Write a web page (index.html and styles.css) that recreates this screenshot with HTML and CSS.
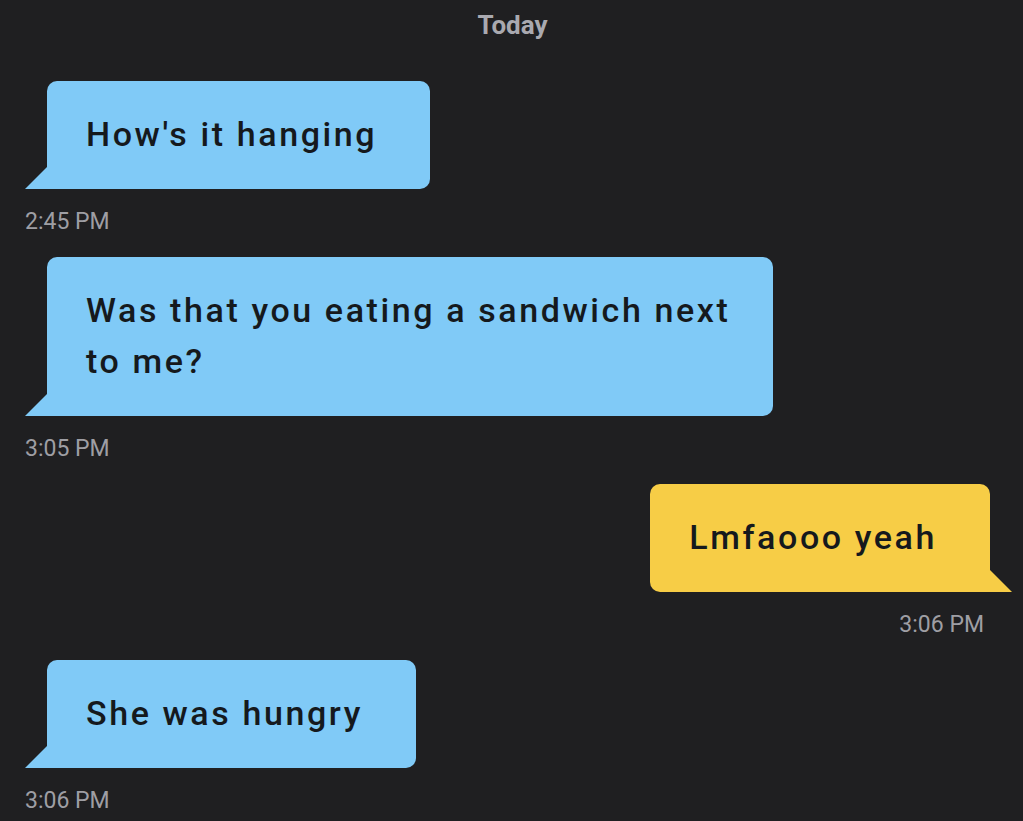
FILE: index.html
```html
<!DOCTYPE html>
<html lang="en">
<head>
<meta charset="utf-8">
<title>Chat</title>
<link rel="stylesheet" href="styles.css">
</head>
<body>
<main class="chat">
  <div class="day">Today</div>

  <div class="msg in">
    <div class="bubble">How's it hanging</div>
    <div class="time">2:45 PM</div>
  </div>

  <div class="msg in">
    <div class="bubble wide">Was that you eating a sandwich next to me?</div>
    <div class="time">3:05 PM</div>
  </div>

  <div class="msg out">
    <div class="bubble">Lmfaooo yeah</div>
    <div class="time">3:06 PM</div>
  </div>

  <div class="msg in">
    <div class="bubble">She was hungry</div>
    <div class="time">3:06 PM</div>
  </div>
</main>
</body>
</html>
```

FILE: styles.css
```css
html, body {
  margin: 0;
  padding: 0;
  background: #1f1f21;
}

.chat {
  display: flex;
  flex-direction: column;
  gap: 22px;
  padding: 10px 11px 0 25px;
  font-family: Roboto, "Liberation Sans", sans-serif;
}

.day {
  text-align: center;
  font-size: 26px;
  line-height: 30px;
  font-weight: 700;
  color: #a9a9b0;
  margin-bottom: 19px;
  margin-left: -12px;
}

.msg {
  display: flex;
  flex-direction: column;
}

.msg.in {
  align-items: flex-start;
}

.msg.out {
  align-items: flex-end;
}

.bubble {
  position: relative;
  box-sizing: border-box;
  max-width: 740px;
  padding: 28px 53px 29px 39px;
  font-size: 34px;
  line-height: 51px;
  font-weight: 500;
  letter-spacing: 2.6px;
  color: #15191d;
}

.bubble.wide {
  width: 726px;
  padding-right: 30px;
}

.msg.in .bubble {
  margin-left: 22px;
  background: #80caf7;
  border-radius: 10px 10px 10px 0;
}

.msg.out .bubble {
  margin-right: 22px;
  background: #f7cd46;
  border-radius: 10px 10px 0 10px;
}

.bubble::after {
  content: "";
  position: absolute;
  bottom: 0;
  width: 22px;
  height: 22px;
  background: inherit;
}

.msg.in .bubble::after {
  left: -22px;
  clip-path: polygon(100% 0, 0 100%, 100% 100%);
}

.msg.out .bubble::after {
  right: -22px;
  clip-path: polygon(0 0, 100% 100%, 0 100%);
}

.time {
  margin-top: 19px;
  font-size: 23px;
  line-height: 27px;
  font-weight: 400;
  color: #9e9ea4;
}

.msg.out .time {
  margin-right: 28px;
}
```
